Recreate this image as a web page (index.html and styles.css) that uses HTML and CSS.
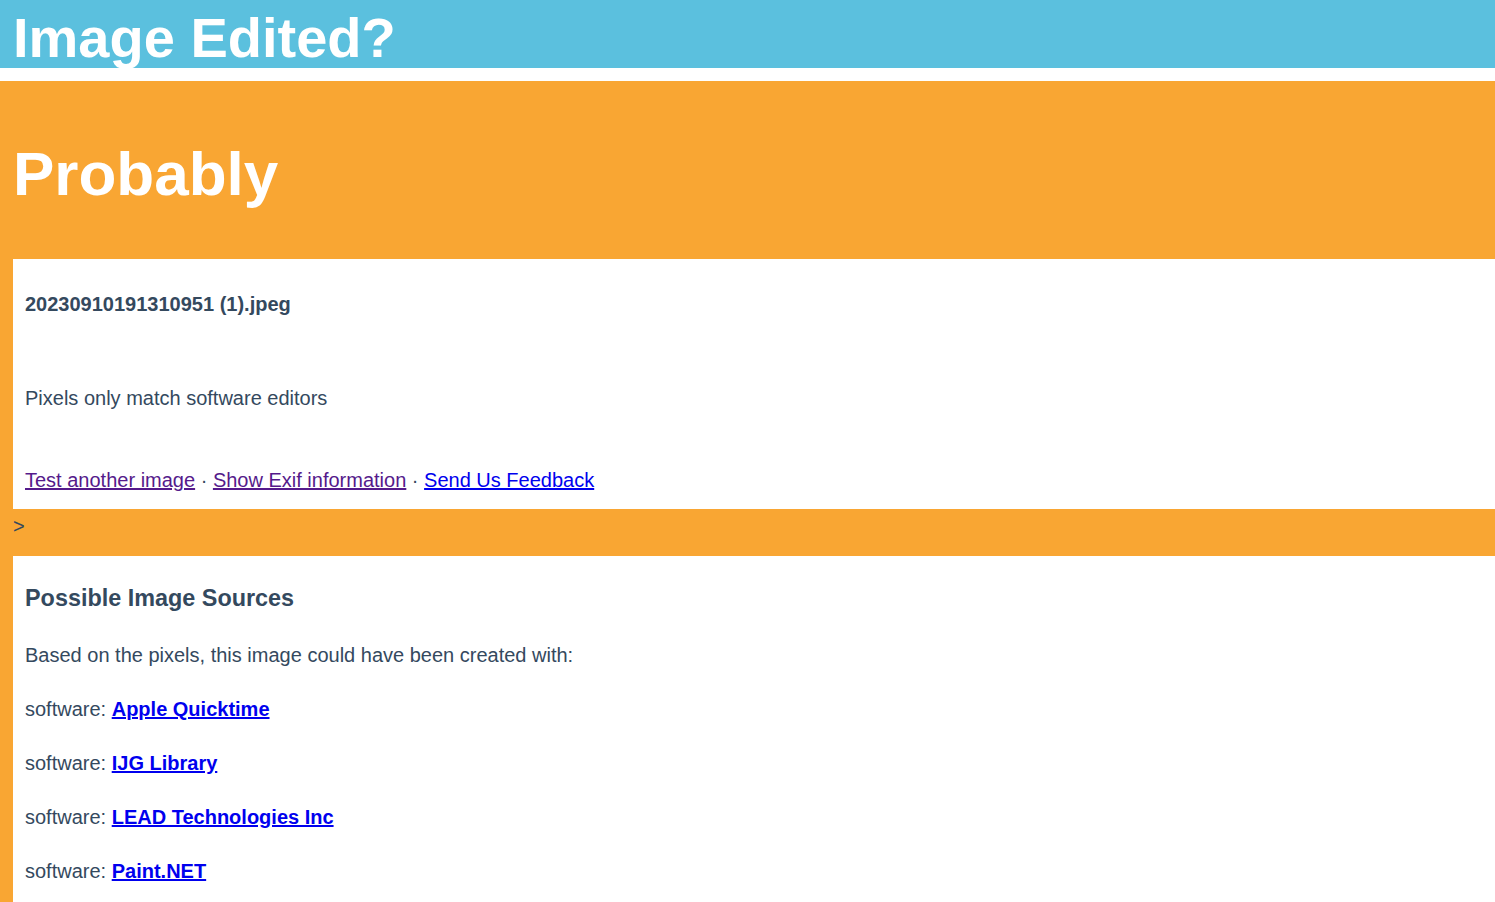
FILE: index.html
```html
<!DOCTYPE html>
<html lang="en">
<head>
    <meta charset="UTF-8">
    <meta name="viewport" content="width=device-width, initial-scale=1.0">
    <title>Image Edited?</title>
    <link rel="stylesheet" href="styles.css">
</head>
<body>
    <!-- Bandeau -->
    <header class="site-header">
        <h1>Image Edited?</h1>
    </header>

    <!-- Résultat -->
    <div class="result">
        <h2 class="verdict">Probably</h2>

        <div class="card">
            <p class="filename">20230910191310951 (1).jpeg</p>
            <p class="summary">Pixels only match software editors</p>
            <p class="actions">
                <a href="#" class="visited">Test another image</a> &middot;
                <a href="#" class="visited">Show Exif information</a> &middot;
                <a href="#">Send Us Feedback</a>
            </p>
        </div>
        <div class="stray">&gt;</div>

        <div class="card sources">
            <h3>Possible Image Sources</h3>
            <p>Based on the pixels, this image could have been created with:</p>
            <p>software: <a href="#" class="source">Apple Quicktime</a></p>
            <p>software: <a href="#" class="source">IJG Library</a></p>
            <p>software: <a href="#" class="source">LEAD Technologies Inc</a></p>
            <p>software: <a href="#" class="source">Paint.NET</a></p>
        </div>
    </div>
</body>
</html>
```

FILE: styles.css
```css
/* Styles globaux */
body {
    font-family: 'Liberation Sans', Arial, sans-serif;
    margin: 0;
    padding: 0;
    color: #34495e;
    background: white;
    font-size: 20px;
}

a {
    color: #0000ee;
}

a.visited {
    color: #551a8b;
}

/* Bandeau */
.site-header {
    background-color: #5bc0de;
    height: 68px;
    padding-left: 13px;
    margin-bottom: 13px;
    overflow: hidden;
}

.site-header h1 {
    margin: 0;
    padding-top: 11px;
    font-size: 56px;
    line-height: 54px;
    color: white;
}

/* Résultat */
.result {
    background-color: #f9a633;
    padding-left: 13px;
    padding-bottom: 40px;
}

.verdict {
    margin: 0;
    padding: 58px 0 51px;
    font-size: 62px;
    line-height: 69px;
    color: white;
}

.card {
    background: white;
    padding: 12px;
}

.card p {
    margin: 0;
    line-height: 34px;
}

.filename {
    font-weight: bold;
    margin-top: 16px !important;
    margin-bottom: 60px !important;
}

.summary {
    margin-bottom: 48px !important;
}

.stray {
    line-height: 34px;
    margin-bottom: 13px;
}

/* Sources */
.sources h3 {
    margin: 10px 0 20px;
    font-size: 23.4px;
    line-height: 40px;
}

.sources p {
    margin-bottom: 20px;
}

.source {
    font-weight: bold;
}
```
